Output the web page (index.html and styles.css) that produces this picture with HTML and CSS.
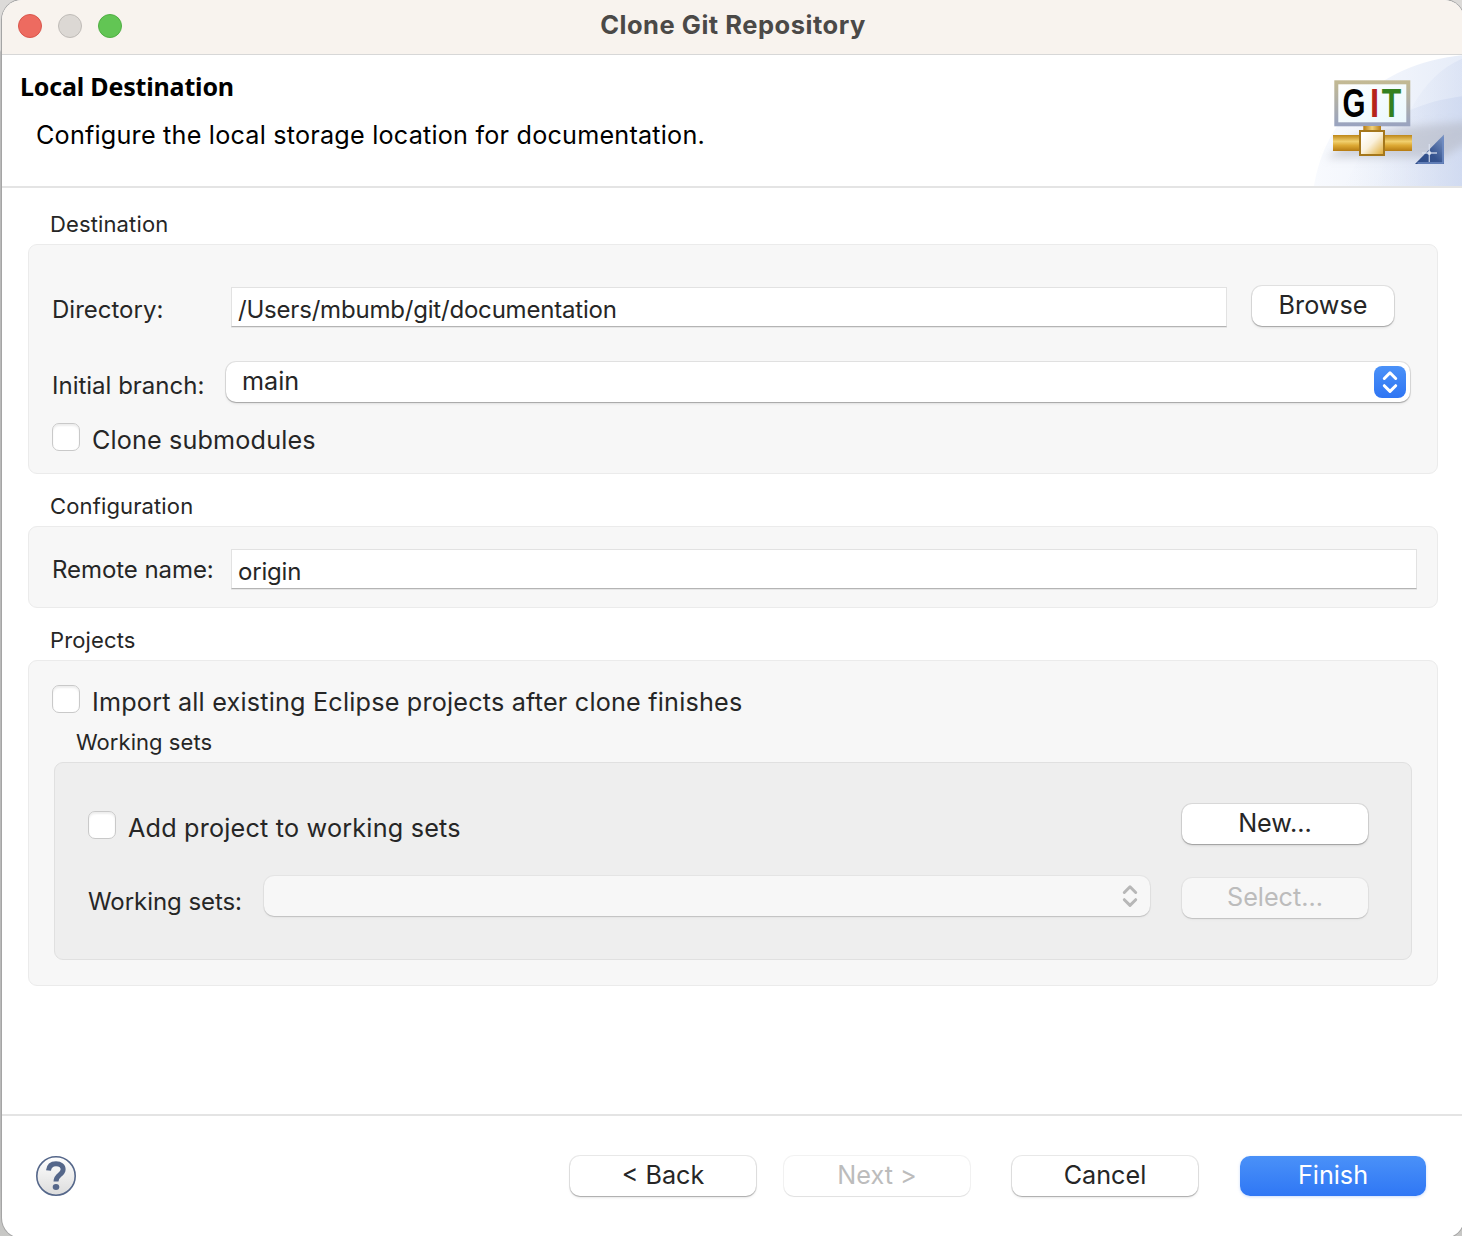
FILE: index.html
```html
<!DOCTYPE html>
<html lang="en">
<head>
<meta charset="utf-8">
<title>Clone Git Repository</title>
<link rel="stylesheet" href="styles.css">
</head>
<body>
<main class="window">
  <header class="titlebar">
    <div class="lights"><i class="light red"></i><i class="light gray"></i><i class="light green"></i></div>
    <h1 class="title">Clone Git Repository</h1>
  </header>
  <section class="banner">
    <div class="banner-text">
      <h2 class="heading">Local Destination</h2>
      <p class="message">Configure the local storage location for documentation.</p>
    </div>
    <svg class="banner-art" width="150" height="131" viewBox="0 0 150 131">
      <defs>
        <linearGradient id="sky" x1="0" y1="0" x2="1" y2="0"><stop offset="0" stop-color="#f8fafe"/><stop offset=".6" stop-color="#eff3fb"/><stop offset="1" stop-color="#e6ecf8"/></linearGradient>
        <linearGradient id="wave" x1="0" y1="0" x2="1" y2="0"><stop offset="0" stop-color="#dfe6f5" stop-opacity="0"/><stop offset="1" stop-color="#cbd6ef"/></linearGradient>
        <linearGradient id="frame" x1="0" y1="0" x2="0" y2="1"><stop offset="0" stop-color="#c2b994"/><stop offset="1" stop-color="#9aa4bf"/></linearGradient>
        <linearGradient id="panel" x1="0" y1="0" x2="1" y2="1"><stop offset="0" stop-color="#fff"/><stop offset="1" stop-color="#e9f7fd"/></linearGradient>
        <linearGradient id="pipe" x1="0" y1="0" x2="0" y2="1"><stop offset="0" stop-color="#bd8619"/><stop offset=".4" stop-color="#f1d06e"/><stop offset=".65" stop-color="#dda934"/><stop offset="1" stop-color="#b67b12"/></linearGradient>
        <linearGradient id="stem" x1="0" y1="0" x2="1" y2="0"><stop offset="0" stop-color="#b67b12"/><stop offset=".5" stop-color="#f1d27a"/><stop offset="1" stop-color="#b67b12"/></linearGradient>
        <linearGradient id="hub" x1="0" y1="0" x2="1" y2="1"><stop offset=".15" stop-color="#fff"/><stop offset=".5" stop-color="#faf1dc"/><stop offset="1" stop-color="#dfa92e"/></linearGradient>
        <linearGradient id="corner" x1="0" y1="1" x2="1" y2="0"><stop offset="0" stop-color="#2c4a86"/><stop offset=".45" stop-color="#35538f"/><stop offset="1" stop-color="#8099c6"/></linearGradient>
        <filter id="soft" x="-20%" y="-40%" width="140%" height="180%"><feGaussianBlur stdDeviation="4"/></filter>
      </defs>
      <path d="M0 131C10 66 62 8 150 0V131Z" fill="url(#sky)"/>
      <path d="M98 52C112 28 128 12 150 3V131H60Z" fill="url(#wave)" opacity=".4"/>
      <path d="M60 75C95 52 120 45 150 41V131H30Z" fill="url(#wave)" opacity=".7"/>
      <path d="M12 103L40 82 90 72 160 66V84L128 103Z" fill="#b2b5c0" opacity=".55" filter="url(#soft)"/>
      <rect x="22.3" y="27.3" width="72" height="42" fill="url(#panel)" stroke="url(#frame)" stroke-width="4"/>
      <g class="git">
        <text transform="translate(28.4 62) scale(.72 1)" fill="#000">G</text>
        <text transform="translate(56 62) scale(.8 1)" fill="#b5231b">I</text>
        <text transform="translate(67.800 62) scale(.78 1)" fill="#33801f">T</text>
      </g>
      <rect x="49.3" y="71" width="17.7" height="5" fill="url(#stem)"/>
      <rect x="19" y="80" width="79" height="16" fill="url(#pipe)"/>
      <rect x="46" y="76" width="24" height="24" fill="url(#hub)" stroke="#a5771b" stroke-width="2"/>
      <path d="M101 109H130V79.500Z" fill="url(#corner)"/>
      <path d="M103.500 108H129V82" fill="none" stroke="#6f8cc4" stroke-width="1.500"/>
      <path d="M115.300 89V107M108 98H123" stroke="#dfe6f4" stroke-width="1.300" opacity=".8"/>
      <circle cx="115.300" cy="98" r="2" fill="#e6ecf7" opacity=".8"/>
    </svg>
  </section>

  <section class="content">
    <h3 class="group-title">Destination</h3>
    <div class="group destination">
      <div class="row dir-row">
        <label class="label dir-label">Directory:</label>
        <div class="field dir-field"><span class="path">/Users/mbumb/git/documentation</span></div>
        <button class="button browse">Browse</button>
      </div>
      <div class="row branch-row">
        <label class="label branch-label">Initial branch:</label>
        <div class="select branch-select"><span class="main">main</span>
          <span class="stepper"><svg width="32" height="32" viewBox="0 0 32 32"><path d="M10.300 12.500L16 6.800L21.700 12.500M10.300 19.700L16 25.400L21.700 19.700"/></svg></span>
        </div>
      </div>
      <label class="check-row"><i class="checkbox"></i><span class="clone">Clone submodules</span></label>
    </div>

    <h3 class="group-title">Configuration</h3>
    <div class="group configuration">
      <label class="label remote-label">Remote name:</label>
      <div class="field remote-field"><span class="origin">origin</span></div>
    </div>

    <h3 class="group-title">Projects</h3>
    <div class="group projects">
      <label class="check-row"><i class="checkbox"></i><span class="import">Import all existing Eclipse projects after clone finishes</span></label>
      <h4 class="group-title inner-title">Working sets</h4>
      <div class="group inner">
        <div class="row add-row">
          <label class="check-row"><i class="checkbox"></i><span class="add">Add project to working sets</span></label>
          <button class="button wide new">New...</button>
        </div>
        <div class="row sets-row">
          <label class="label sets-label">Working sets:</label>
          <div class="select sets-select disabled">
            <span class="stepper"><svg width="32" height="32" viewBox="0 0 32 32"><path d="M10.300 12.500L16 6.800L21.700 12.500M10.300 19.700L16 25.400L21.700 19.700"/></svg></span>
          </div>
          <button class="button wide disabled choose" disabled>Select...</button>
        </div>
      </div>
    </div>
  </section>

  <footer class="footer">
    <svg class="help" width="40" height="40" viewBox="0 0 40 40">
      <defs><linearGradient id="disc" x1="0" y1="0" x2="0" y2="1"><stop offset="0" stop-color="#fff"/><stop offset="1" stop-color="#dcdcdc"/></linearGradient></defs>
      <circle cx="20" cy="20" r="19.200" fill="url(#disc)" stroke="#55678a" stroke-width="1.600"/>
      <path d="M12.500 14.500C13 9.700 16 7.700 20 7.700C24.500 7.700 27.300 10 27.100 13.700C26.900 19 20 18.500 20 25.500" fill="none" stroke="#55678a" stroke-width="5"/>
      <ellipse cx="20" cy="31" rx="3.300" ry="3" fill="#55678a"/>
    </svg>
    <button class="button wide back">&lt; Back</button>
    <button class="button wide disabled next" disabled>Next &gt;</button>
    <button class="button wide cancel">Cancel</button>
    <button class="button wide finish">Finish</button>
  </footer>
</main>
</body>
</html>
```
FILE: styles.css
```css
* { box-sizing: border-box; }
html, body { height: 1236px; overflow: hidden; }
body {
  margin: 0;
  padding-left: 2px;
  background: linear-gradient(#dcdad8 0 50px, #b9b9b9 52px 1180px, #c8c8c6);
  font-family: Inter, "Liberation Sans", sans-serif;
  color: #262626;
}
h1, h2, h3, h4, p { margin: 0; font-weight: 400; }
.window {
  display: flex;
  flex-direction: column;
  width: 1462px;
  height: 1238px;
  border-radius: 20px;
  overflow: hidden;
  background: #fff;
  box-shadow: 0 0 0 1px #a5a5a5;
}
.titlebar {
  display: grid;
  grid-template-columns: 120px 1fr 120px;
  height: 55px;
  background: #f8f3ee;
  border-bottom: 1px solid #d7d7d7;
}
.lights { display: flex; gap: 16px; padding: 14px 0 0 16px; }
.light { width: 24px; height: 24px; border-radius: 50%; border: 1px solid; }
.red { background: #ed6b60; border-color: #d9564c; }
.gray { background: #dcd8d4; border-color: #bfbbb7; }
.green { background: #62c554; border-color: #50ae43; }
.title {
  line-height: 50px;
  text-align: center;
  font-size: 25.500px;
  font-weight: 700;
  color: #4b4947;
  letter-spacing: 0.520px;
}
.banner {
  display: flex;
  justify-content: space-between;
  height: 133px;
  border-bottom: 2px solid #e4e4e4;
  color: #000;
}
.banner-text { padding: 13px 0 0 18px; }
.heading { font: 700 25px/36px "Noto Sans", "Open Sans", sans-serif; letter-spacing: -0.180px; }
.message { margin-top: 13px; padding-left: 16px; font-size: 25.200px; line-height: 36px; white-space: nowrap; letter-spacing: 0.210px; }
.git { font: 700 41px "Liberation Sans", sans-serif; }

.content { flex: 1; padding: 20px 26px 0; }
.group-title { height: 32px; margin: 16px 0 4px 22px; font-size: 22px; line-height: 32px; letter-spacing: 0.130px; }
.group-title:first-child { margin-top: 0; }
.group {
  width: 1410px;
  border: 1px solid #ebebeb;
  border-radius: 9px;
  background: #f7f7f7;
}
.row { display: flex; }
.label { font-size: 24px; line-height: 34px; white-space: nowrap; }
.destination { height: 230px; padding: 41px 23px 0; }
.dir-label { width: 179px; margin-top: 7px; }
.field {
  height: 40px;
  padding-left: 6px;
  border: 1px solid #e2e2e2;
  border-bottom-color: #b4b4b4;
  background: #fff;
  font-size: 24px;
  line-height: 43px;
  box-shadow: 0 1px 0 #e6e6e6;
  letter-spacing: -0.200px;
}
.dir-row { height: 76px; }
.dir-field { width: 996px; margin-top: 1px; }
.button {
  flex: none;
  height: 40px;
  padding: 0 0 2px;
  border: 0;
  border-radius: 10px;
  background: #fff;
  color: #262626;
  font: 25.200px/38px Inter, "Liberation Sans", sans-serif;
  box-shadow: 0 0 0 1px rgba(0,0,0,.09), 0 1px 1px rgba(0,0,0,.2), 0 2px 3px rgba(0,0,0,.08);
}
.browse { width: 142px; margin-left: 25px; }
.wide { width: 186px; }
.branch-row { height: 58px; }
.branch-label { width: 174px; margin-top: 7px; }
.select {
  display: flex;
  justify-content: space-between;
  height: 40px;
  padding: 4px 4px 4px 16px;
  border-radius: 10px;
  background: #fff;
  box-shadow: 0 0 0 1px rgba(0,0,0,.09), 0 1px 1px rgba(0,0,0,.2), 0 2px 3px rgba(0,0,0,.08);
  font-size: 25.200px;
  line-height: 30px;
}
.branch-select { width: 1184px; }
.stepper { width: 32px; height: 32px; margin-left: auto; border-radius: 8px; background: linear-gradient(#4a91f8, #2f75f3); }
.stepper svg { display: block; fill: none; stroke: #fff; stroke-width: 3; stroke-linecap: round; stroke-linejoin: round; }
.check-row { display: flex; font-size: 25.200px; line-height: 34px; white-space: nowrap; letter-spacing: 0.200px; }
.checkbox {
  width: 28px;
  height: 28px;
  margin: 3px 12px 0 0;
  border: 1px solid #c9c9c9;
  border-radius: 7px;
  background: #fff;
  box-shadow: inset 0 2px 2px rgba(0,0,0,.07);
}
.destination .checkbox { margin-top: 3px; }
.destination .check-row span { margin-top: 3px; letter-spacing: 0.140px; }
.configuration { display: flex; height: 82px; padding: 22px 20px 0 23px; }
.remote-label { width: 179px; margin-top: 4px; letter-spacing: -0.060px; }
.remote-field { width: 1186px; }
.projects { height: 326px; padding: 24px 25px 0; }
.projects > .check-row { height: 40px; margin-left: -2px; }
.projects .checkbox { margin-top: 0; }
.projects .check-row span { margin-top: 0; }
.inner-title { margin: 1px 0 4px 22px; letter-spacing: 0.050px; }
.inner { width: 1358px; height: 198px; padding: 41px 43px 0 33px; border-color: #e0e0e0; background: #eee; }
.add-row { justify-content: space-between; height: 72px; }
.add-row .checkbox { margin-top: 7px; }
.add-row .check-row span { margin-top: 7px; }
.sets-label { width: 176px; margin-top: 9px; letter-spacing: -0.060px; }
.sets-select { width: 886px; }
.select.disabled, .inner .button.disabled { background: #f7f7f7; box-shadow: 0 0 0 1px rgba(0,0,0,.04), 0 1px 1px rgba(0,0,0,.13), 0 2px 3px rgba(0,0,0,.03); }
.select.disabled .stepper { background: none; }
.select.disabled svg { stroke: #b7b7b7; }
.button.disabled { color: #bcbcbc; }
.choose { margin: 2px 0 0 32px; }

.footer {
  display: flex;
  height: 124px;
  padding: 40px 38px 0 34px;
  border-top: 2px solid #e4e4e4;
}
.help { margin-right: auto; }
.back { margin-right: 28px; }
.next { margin-right: 42px; background: #fff; box-shadow: 0 0 0 1px rgba(0,0,0,.05), 0 1px 1px rgba(0,0,0,.07); }
.cancel { margin-right: 42px; }
.finish { color: #fff; background: linear-gradient(#4a91f8, #2f77f5); box-shadow: 0 1px 3px rgba(47,119,245,.25); }
```
